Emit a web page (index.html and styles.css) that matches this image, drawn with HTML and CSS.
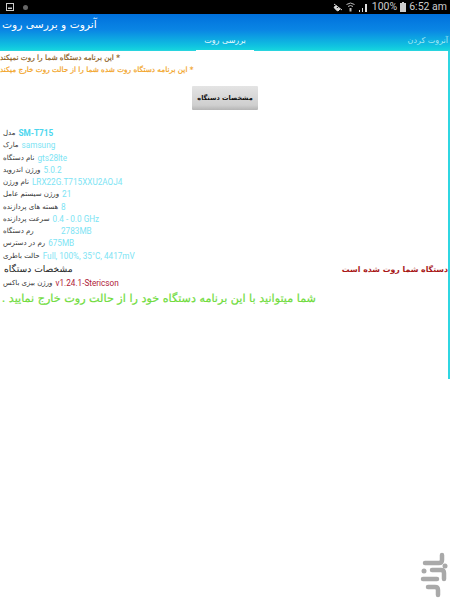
FILE: index.html
```html
<!DOCTYPE html>
<html lang="fa">
<head>
<meta charset="utf-8">
<title>آنروت و بررسی روت</title>
<link rel="stylesheet" href="styles.css">
</head>
<body>
<div class="status">
  <div class="status-left">
    <svg class="ic" width="8" height="8" viewBox="0 0 8 8"><rect x="0.5" y="0.5" width="7" height="7" fill="none" stroke="#ccc"/><rect x="2" y="4.5" width="4" height="1.5" fill="#ccc"/></svg>
    <svg class="ic" width="7" height="7" viewBox="0 0 7 7"><circle cx="3.5" cy="3.5" r="2.5" fill="#666"/></svg>
  </div>
  <div class="status-right">
    <svg class="ic" width="10" height="9" viewBox="0 0 10 9"><path d="M1 1l8 6M1 4c1 2 2 3 4 4l2-2-2-1-1 1-1-2 1-1z" stroke="#ddd" fill="#ddd" stroke-width="1"/></svg>
    <svg class="ic" width="9" height="10" viewBox="0 0 9 10"><path d="M0.5 2.500Q4.500-0.500 8.500 2.500M2 4.500Q4.500 2.500 7 4.500" stroke="#bbb" fill="none"/><path d="M3.500 6h2v3.500h-2z" fill="#bbb"/></svg>
    <svg class="ic" width="10" height="9" viewBox="0 0 10 9"><path d="M1 7h1v2H1zM4 5h1v4H4zM7 1h2v8H7z" fill="#ddd"/></svg>
    <span class="pct">100%</span>
    <svg class="ic" width="6" height="10" viewBox="0 0 6 10"><path d="M2 0h2v1h2v9H0V1h2z" fill="#ccc"/></svg>
    <span>6:52 am</span>
  </div>
</div>
<header class="appbar">
  <h1 class="title">آنروت و بررسی روت</h1>
  <nav class="tabs">
    <div class="tab tab-spacer"></div>
    <div class="tab tab-active">بررسی روت</div>
    <div class="tab tab-other">آنروت کردن</div>
  </nav>
</header>
<div class="indicator-row"><span class="line"></span><span class="gap"></span><span class="line grow"></span></div>
<main class="panel">
  <p class="note note-dark" dir="rtl">* این برنامه دستگاه شما را روت نمیکند</p>
  <p class="note note-orange" dir="rtl">* این برنامه دستگاه روت شده شما را از حالت روت خارج میکند</p>
  <div class="btn-wrap"><button class="btn">مشخصات دستگاه</button></div>
  <dl class="rows">
    <div class="row"><dt>مدل</dt><dd class="strong">SM-T715</dd></div>
    <div class="row"><dt>مارک</dt><dd>samsung</dd></div>
    <div class="row"><dt>نام دستگاه</dt><dd>gts28lte</dd></div>
    <div class="row"><dt>ورژن اندروید</dt><dd>5.0.2</dd></div>
    <div class="row"><dt>نام ورژن</dt><dd>LRX22G.T715XXU2AOJ4</dd></div>
    <div class="row"><dt>ورژن سیستم عامل</dt><dd>21</dd></div>
    <div class="row"><dt>هسته های پردازنده</dt><dd>8</dd></div>
    <div class="row"><dt>سرعت پردازنده</dt><dd>0.4 - 0.0 GHz</dd></div>
    <div class="row"><dt class="wide">رم دستگاه</dt><dd>2783MB</dd></div>
    <div class="row"><dt>رم در دسترس</dt><dd>675MB</dd></div>
    <div class="row"><dt>حالت باطری</dt><dd>Full, 100%, 35°C, 4417mV</dd></div>
  </dl>
  <div class="split">
    <div class="heading">مشخصات دستگاه</div>
    <div class="rooted">دستگاه شما روت شده است</div>
  </div>
  <div class="row version"><span class="vlabel">ورژن بیزی باکس</span><span class="vval">v1.24.1-Stericson</span></div>
  <p class="green" dir="rtl">شما میتوانید با این برنامه دستگاه خود را از حالت روت خارج نمایید .</p>
</main>
<svg class="logo" width="30" height="46" viewBox="0 0 30 46"><g fill="none" stroke="#a9a9a9" stroke-width="4.500" stroke-linecap="round" stroke-linejoin="round"><path d="M5 11H19Q22 11 22 8V3"/><path d="M12 18H21Q24 18 24 21V27"/><path d="M3 27H17"/><path d="M8 35H15Q18 35 18 38V43"/></g><circle cx="25" cy="14" r="2.500" fill="#a9a9a9"/><circle cx="4" cy="19" r="2.500" fill="#a9a9a9"/></svg>
</body>
</html>
```

FILE: styles.css
```css
* { box-sizing: border-box; }
html, body { margin: 0; padding: 0; }
body {
  width: 450px;
  height: 600px;
  overflow: hidden;
  background: #fff;
  font-family: "DejaVu Sans", sans-serif;
  position: relative;
}
.status {
  height: 14px;
  background: #000;
  color: #ccc;
  font: 10.500px/14px Roboto, sans-serif;
  display: flex;
  justify-content: space-between;
  align-items: center;
  padding: 0 3px 0 6px;
}
.status-left, .status-right { display: flex; align-items: center; }
.status-left { gap: 8px; }
.status-right { gap: 3px; }
.ic { display: block; }
.pct { margin-left: 1px; }
.appbar {
  height: 36px;
  background: linear-gradient(#0070dc 0%, #0a86e4 45%, #10c4e0 90%, #16d4de 100%);
  color: #fff;
  display: flex;
  flex-direction: column;
}
.title {
  margin: 0;
  height: 21px;
  padding: 2px 0 0 2px;
  font: 400 10.700px/17px "DejaVu Sans", sans-serif;
}
.tabs { display: flex; height: 15px; }
.tab { font: 8px/11px "DejaVu Sans", sans-serif; white-space: nowrap; }
.tab-spacer { width: 196px; }
.tab-active { width: 58px; text-align: center; color: #e8fbff; }
.tab-other { flex: 1; text-align: right; padding-right: 2px; color: #a6e8f4; }
.indicator-row { display: flex; height: 1px; }
.line { width: 196px; background: #28d4df; }
.gap { width: 58px; background: #fff; }
.grow { flex: 1; width: auto; }
.panel {
  height: 328px;
  border-right: 2px solid #2fd6e2;
  padding-top: 1px;
}
.note {
  margin: 0;
  width: fit-content;
  font: 400 7.300px/12px "DejaVu Sans", sans-serif;
  -webkit-text-stroke: 0.2px currentColor;
  text-rendering: geometricPrecision;
  white-space: nowrap;
}
.note-dark { color: #8a5a18; }
.note-orange { color: #f2a21c; }
.btn-wrap { display: flex; justify-content: center; padding: 10px 0 0 2px; height: 51px; }
.btn {
  width: 66px;
  height: 24px;
  margin: 0;
  padding: 0;
  border: 0;
  border-radius: 1px;
  background: linear-gradient(#e4e4e4, #cfcfcf 80%, #b5b5b5);
  color: #111;
  font: 700 6.500px/24px "DejaVu Sans", sans-serif;
}
.rows { margin: 0; padding: 0 0 0 3px; }
.row {
  display: flex;
  height: 12.250px;
  align-items: center;
  gap: 3px;
  white-space: nowrap;
}
dt { color: #333; font: 7px/12px "DejaVu Sans", sans-serif; }
dt.wide { width: 55px; }
dd { margin: 0; color: #7de4f4; font: 8.200px/12px Roboto, sans-serif; }
dd.strong { font-weight: 700; color: #4ad6ee; }
.split { display: flex; justify-content: space-between; align-items: center; height: 14px; margin-top: 1px; padding-left: 4px; }
.heading { font: 9.200px/14px "DejaVu Sans", sans-serif; color: #222; text-rendering: geometricPrecision; }
.rooted { font: 700 7.800px/14px "DejaVu Sans", sans-serif; color: #a81818; }
.version { padding-left: 3px; height: 12px; }
.vlabel { color: #333; font: 7px/12px "DejaVu Sans", sans-serif; }
.vval { color: #b02038; font: 8.200px/12px Roboto, sans-serif; }
.green {
  margin: 1px 0 0;
  width: 316px;
  color: #6fdc3c;
  font: 400 11.200px/17px "DejaVu Sans", sans-serif;
  -webkit-text-stroke: 0.2px currentColor;
  text-rendering: geometricPrecision;
  white-space: nowrap;
}
.logo { position: absolute; left: 420px; bottom: 2px; }
```
